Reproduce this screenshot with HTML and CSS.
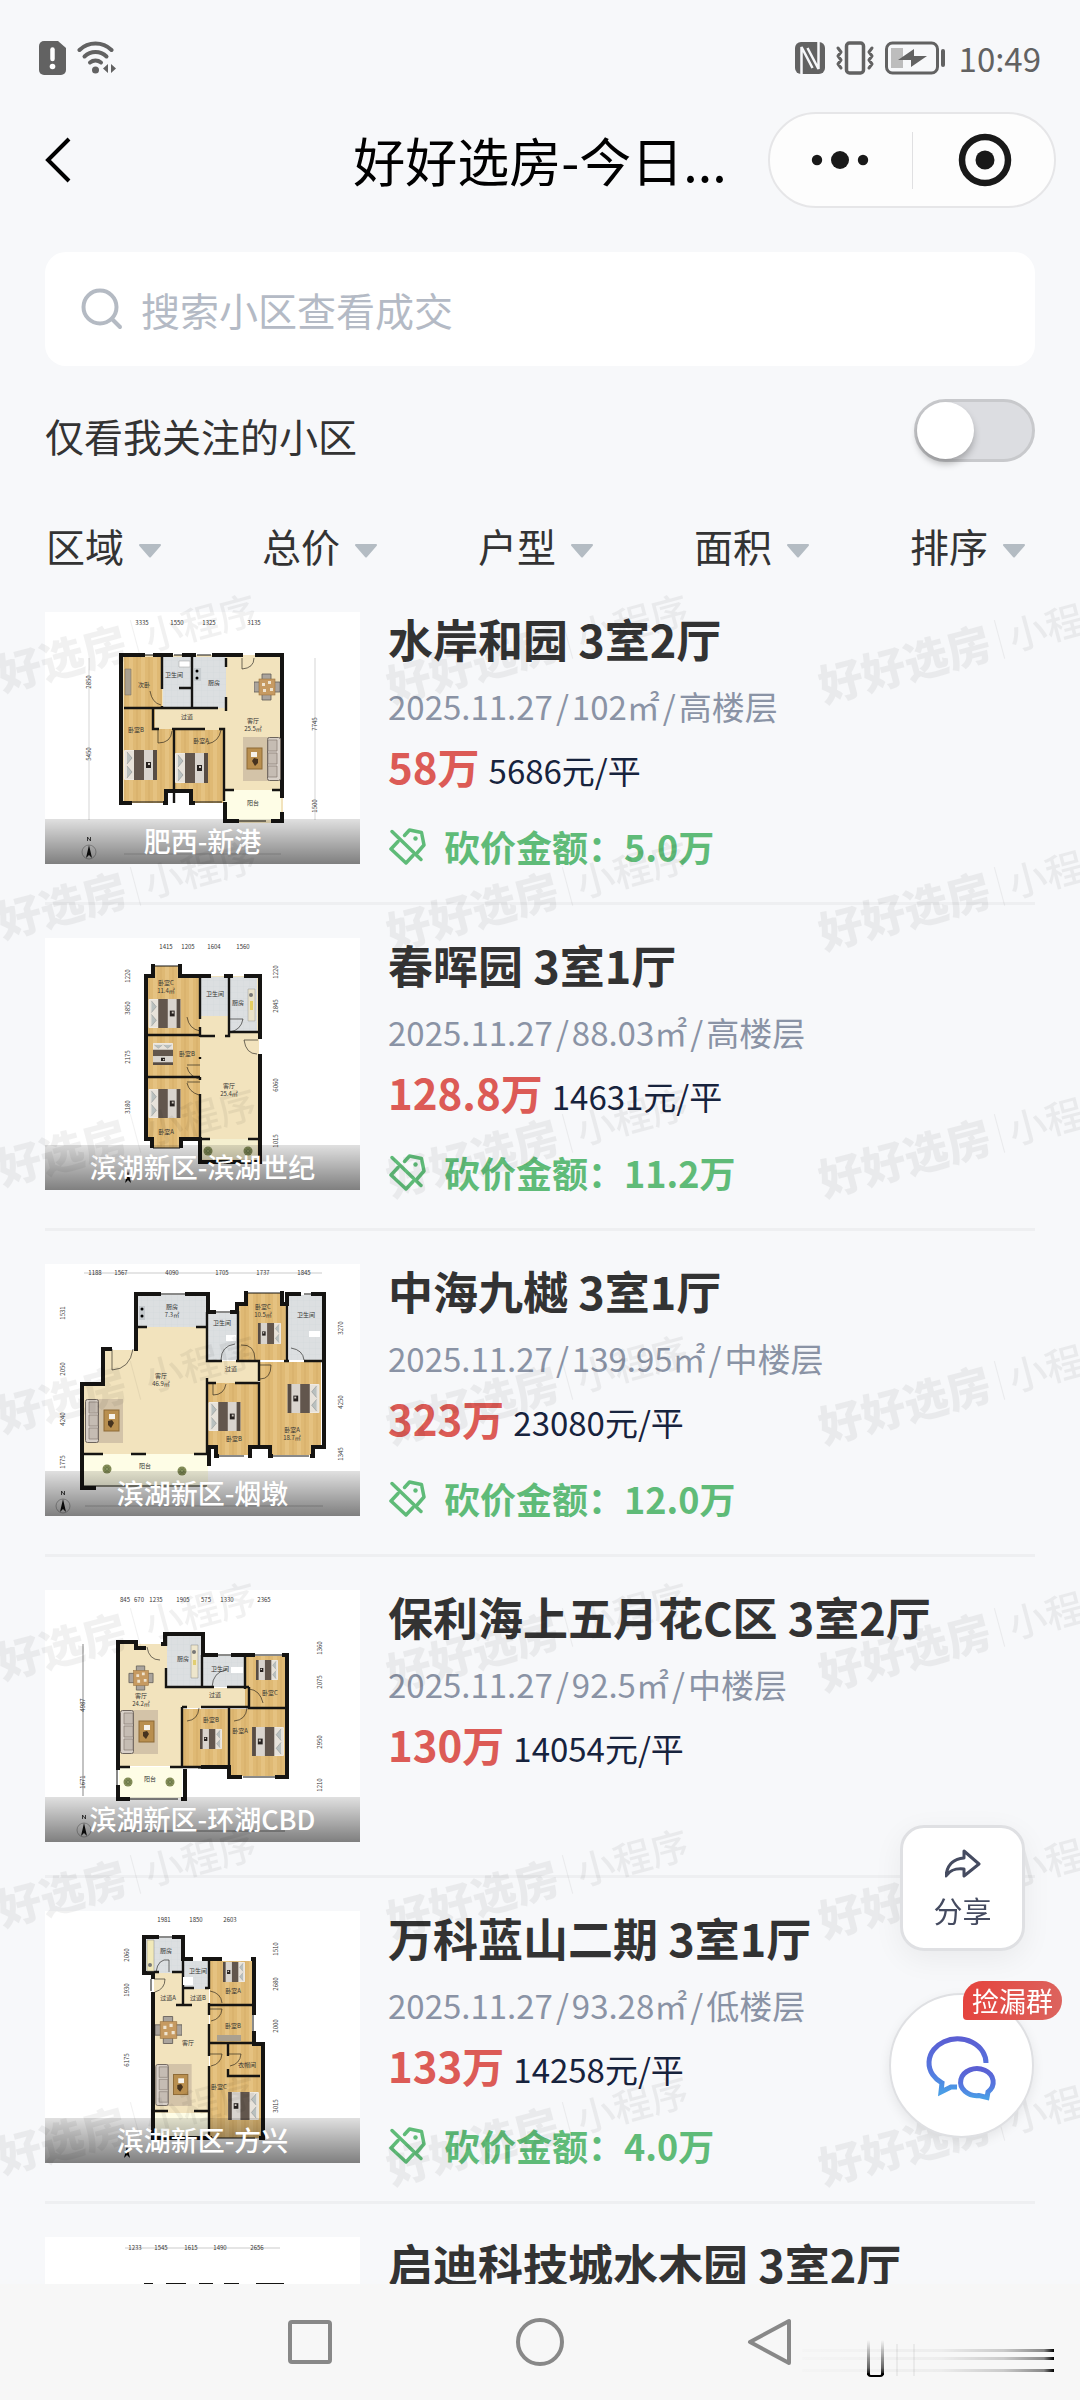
FILE: index.html
```html
<!DOCTYPE html>
<html lang="zh-CN">
<head>
<meta charset="utf-8">
<meta name="viewport" content="width=device-width, initial-scale=1">
<title>好好选房-今日成交</title>
<link rel="stylesheet" href="styles.css">
</head>
<body>

<!-- Shared drawings -->
<svg class="defs" aria-hidden="true">
  <defs>
    <linearGradient id="chat-fill" x1="0" y1="0" x2="0" y2="1">
      <stop offset="0" stop-color="#5b5fd3"/><stop offset=".6" stop-color="#5577df"/><stop offset="1" stop-color="#4a9de6"/>
    </linearGradient>
    <linearGradient id="smear" x1="0" y1="0" x2="1" y2="0">
      <stop offset="0" stop-color="#000" stop-opacity=".01"/><stop offset=".55" stop-color="#000" stop-opacity=".04"/><stop offset=".8" stop-color="#000" stop-opacity=".18"/><stop offset=".96" stop-color="#000" stop-opacity=".45"/><stop offset="1" stop-color="#000"/>
    </linearGradient>
    <linearGradient id="smear-down" x1="0" y1="0" x2="0" y2="1">
      <stop offset="0" stop-color="#000" stop-opacity="0"/><stop offset=".8" stop-color="#000" stop-opacity=".6"/><stop offset="1" stop-color="#000"/>
    </linearGradient>
    <pattern id="wood" width="12" height="16" patternUnits="userSpaceOnUse">
      <rect width="12" height="16" fill="#dfb974"/><rect width="4" height="16" fill="#e5c281"/><path d="M8 0v16" stroke="#d6ae68"/>
    </pattern>
    <pattern id="tile" width="6" height="6" patternUnits="userSpaceOnUse">
      <rect width="6" height="6" fill="#dcdfe1"/><path d="M0 0h6M0 0v6" stroke="#d2d6d8" stroke-width=".6"/>
    </pattern>
  </defs>
  <symbol id="bed" viewBox="0 0 33 30">
    <rect width="33" height="30" rx="1" fill="#efebe4"/>
    <path d="M1 1h9v28H1z" fill="#e7e2da"/><path d="M3 2l5 6-5 6M3 16l5 6-5 6" fill="#b9c0bf" stroke="#8d9090" stroke-width=".6"/>
    <path d="M10 0h10v30H10z" fill="#62564d"/><path d="M20 0h9v30h-9z" fill="#d9d4ce"/><path d="M29 0h4v30h-4z" fill="#574c44"/>
    <path d="M22 12h5v6h-5z" fill="#26211f"/><path d="M24 13h2v2h-2z" fill="#cfc9c2"/>
  </symbol>
  <symbol id="sofa" viewBox="0 0 38 44">
    <rect x="4" width="34" height="44" fill="#d3c3a8"/>
    <rect x=".5" y=".5" width="13" height="43" rx="2" fill="#d8d0c8" stroke="#6d645c"/>
    <path d="M4 3h9v11H4zM4 16h9v11H4zM4 29h9v11H4z" fill="#c5bcb3" stroke="#867c73" stroke-width=".7"/>
    <rect x="19" y="11" width="15" height="21" fill="#b98f4f" stroke="#8d6a36"/>
    <path d="M24 15h6v5h-6z" fill="#f6f2ea"/><path d="M23 22l4-1 2 3-3 5-3-3z" fill="#46331f"/>
  </symbol>
  <symbol id="dining" viewBox="0 0 26 28">
    <path d="M8 1h9v7H8zM8 20h9v7H8zM0 9h7v10H0zM19 9h7v10h-7z" fill="#aaa49d" stroke="#5f5a55" stroke-width=".8"/>
    <rect x="5" y="6" width="16" height="16" fill="#c69a61" stroke="#9a7340" stroke-width=".6"/>
    <path d="M8 10h3v3H8zM14 8h3v3h-3zM9 16h3v3H9zM16 15h3v3h-3z" fill="#eee3cf"/>
  </symbol>
  <symbol id="plant" viewBox="0 0 10 10">
    <circle cx="5" cy="5" r="4.5" fill="#7e8752"/><circle cx="5" cy="5" r="2.5" fill="#5e6d3c"/><path d="M1 5h8M5 1v8M2 2l6 6M8 2L2 8" stroke="#98a070" stroke-width=".5"/>
  </symbol>
  <symbol id="north" viewBox="0 0 16 24">
    <circle cx="8" cy="16" r="7" fill="none" stroke="#777" stroke-width=".5"/><path d="M8 9l3 13-3-3-3 3z" fill="#111"/><path d="M6.500 5V1l3 4V1" fill="none" stroke="#222" stroke-width=".8"/>
  </symbol>
  <symbol id="cut" viewBox="0 0 38 38">
    <g fill="none" stroke="#5fbb78" stroke-width="3.500" stroke-linecap="round" stroke-linejoin="round">
      <path d="M4 4.500L33 32.500"/>
      <path d="M16.500 8.500L21.500 3l12 2.500 2.500 12.500-6.500 7.500"/>
      <path d="M10 14.500L3 22l15 14 7-7.500"/>
    </g>
    <circle cx="27.500" cy="11.500" r="2.200" fill="#5fbb78"/>
  </symbol>
</svg>

<div class="app">
  <header class="header">
    <div class="status">
      <div class="status-group">
        <svg width="28" height="34" viewBox="0 0 28 34"><path d="M5 0h14l8 7v22a5 5 0 0 1-5 5H5a5 5 0 0 1-5-5V5a5 5 0 0 1 5-5z" fill="#626262"/><path d="M13.500 8.500v9.500" stroke="#fff" stroke-width="4.500" stroke-linecap="round"/><circle cx="13.500" cy="25.500" r="2.800" fill="#fff"/></svg>
        <svg width="40" height="34" viewBox="0 0 40 34"><g fill="none" stroke="#626262" stroke-width="4" stroke-linecap="round"><path d="M2.500 9a23 23 0 0 1 32 0"/><path d="M7.500 15.500a16 16 0 0 1 22 0"/><path d="M13 21.500a9 9 0 0 1 11 0"/></g><circle cx="18.500" cy="29" r="3.500" fill="#626262"/><path d="M31 23v9l-5-4.500zM34 23v9l5-4.500z" fill="#626262"/></svg>
      </div>
      <div class="status-group">
        <svg width="30" height="32" viewBox="0 0 30 32"><rect width="30" height="32" rx="6" fill="#626262"/><path d="M6.500 32V5l11 21" fill="none" stroke="#f7f8fa" stroke-width="2.500"/><path d="M23.500 0v27L12.500 6" fill="none" stroke="#f7f8fa" stroke-width="2.500"/></svg>
        <svg class="status-vibrate" width="40" height="34" viewBox="0 0 40 34"><g fill="none" stroke="#626262" stroke-linecap="round" stroke-linejoin="round"><rect x="11.500" y="2" width="17" height="30" rx="3" stroke-width="3.500"/><path d="M3 7l3 4-3 4 3 4-3 4 3 4M37 7l-3 4 3 4-3 4 3 4-3 4" stroke-width="3"/></g></svg>
        <svg width="61" height="34" viewBox="0 0 61 34"><rect x="1.500" y="2" width="51" height="30" rx="6" fill="none" stroke="#626262" stroke-width="3"/><path d="M6 7h12v20H6z" fill="#bdbdbd"/><path d="M29 8v7h13L26 26v-7H13z" fill="#626262"/><path d="M58 10v14" stroke="#626262" stroke-width="4" stroke-linecap="round"/></svg>
        <span class="status-time">10:49</span>
      </div>
    </div>
    <div class="navbar">
      <button class="back" type="button" aria-label="返回"><svg width="30" height="50" viewBox="0 0 30 50"><path d="M27 4L6 25l21 21" fill="none" stroke="#000" stroke-width="4"/></svg></button>
      <h1 class="page-title">好好选房-今日...</h1>
      <div class="capsule">
        <button type="button" aria-label="更多"><svg width="60" height="20" viewBox="0 0 60 20" fill="#191919"><circle cx="6" cy="10" r="5.200"/><circle cx="29" cy="10" r="9"/><circle cx="52" cy="10" r="5.200"/></svg></button>
        <span class="capsule-line"></span>
        <button type="button" aria-label="关闭"><svg width="58" height="54" viewBox="0 0 58 54"><circle cx="31" cy="27" r="23" fill="none" stroke="#191919" stroke-width="6.500"/><circle cx="31" cy="27" r="9.500" fill="#191919"/></svg></button>
      </div>
    </div>
  </header>

  <label class="search">
    <svg width="42" height="42" viewBox="0 0 42 42"><g fill="none" stroke="#b4bac3" stroke-width="4" stroke-linecap="round"><circle cx="19" cy="19" r="16.500"/><path d="M31 31l8 8"/></g></svg>
    <input type="search" placeholder="搜索小区查看成交" aria-label="搜索小区查看成交">
  </label>

  <div class="follow">
    <label for="follow-only">仅看我关注的小区</label>
    <input id="follow-only" class="switch" type="checkbox" role="switch">
  </div>

  <div class="filters">
    <div class="filter"><select aria-label="区域"><option>区域</option></select><svg class="caret" viewBox="0 0 26 16"><path d="M3 2h20L13 13.500z"/></svg></div>
    <div class="filter"><select aria-label="总价"><option>总价</option></select><svg class="caret" viewBox="0 0 26 16"><path d="M3 2h20L13 13.500z"/></svg></div>
    <div class="filter"><select aria-label="户型"><option>户型</option></select><svg class="caret" viewBox="0 0 26 16"><path d="M3 2h20L13 13.500z"/></svg></div>
    <div class="filter"><select aria-label="面积"><option>面积</option></select><svg class="caret" viewBox="0 0 26 16"><path d="M3 2h20L13 13.500z"/></svg></div>
    <div class="filter"><select aria-label="排序"><option>排序</option></select><svg class="caret" viewBox="0 0 26 16"><path d="M3 2h20L13 13.500z"/></svg></div>
  </div>

  <main class="list">
    <article class="deal">
      <figure class="plan">
        <svg viewBox="0 0 315 252" aria-hidden="true">
          <path d="M76 43h162v168h-60v-20H76z" fill="#f2e3bd"/>
          <path d="M79 45h38v51H79zM79 96h31v21h18v74H79zM130 118h48v73h-48z" fill="url(#wood)"/>
          <path d="M118 45h63v51h-63z" fill="url(#tile)"/><path d="M179 178h57v30h-57z" fill="#fefde6"/>
          <path d="M122 179h22v16h-22z" fill="#fff"/>
          <g fill="none" stroke="#151412"><path d="M87 191H76V43h24m8 0h20m9 0h14m16 0h31m12 0h27v143m0 14v9h-11m-32 0h-14v-19M118 191h3v-12h25v12h4" stroke-width="4"/><path d="M117 43v34m0 17v3M147 43v52M134 76h13M79 96h94m8-2v5m0-53v9m0 30v10M108 96v21h6m13 0h33m14 0h5v72M129 117v74M179 178h10m38 0h10" stroke-width="2.400"/><path d="M87 190h34m28 0h28M189 209h32M100 43h8m21 0h8m15 0h14" stroke-width="1"/><path d="M197 46v11q12-1 12-11M105 79q2 12 11 14M113 118v13q13 0 14-12M176 118q-2 12-14 14" stroke-width=".6"/></g>
          <path d="M80 57h6v26h-6z" fill="#aaa08f" stroke="#71695c" stroke-width=".5"/><path d="M134 49h11v6h-11z" fill="#fff" stroke="#999" stroke-width=".5"/><path d="M149 56h7v13h-7z" fill="#c8cdd0"/><circle cx="152" cy="59" r="1.500"/><circle cx="152" cy="66" r="1.500"/>
          <use href="#bed" x="79" y="138" width="33" height="30"/><use href="#bed" x="130" y="141" width="33" height="30"/>
          <use href="#dining" x="209" y="61" width="26" height="28"/><use href="#sofa" transform="translate(236 125) scale(-1 1)" width="38" height="44"/>
          <use href="#north" x="36" y="224" width="16" height="24"/>
          <path d="M44 46v162M270 46v162M79 242h157" stroke="#bbb" stroke-width=".6" fill="none"/>
          <g class="dims"><text x="97" y="13">3335</text><text x="132" y="13">1550</text><text x="164" y="13">1325</text><text x="209" y="13">3135</text><text transform="translate(46 70) rotate(-90)">2850</text><text transform="translate(46 142) rotate(-90)">5450</text><text transform="translate(272 112) rotate(-90)">7745</text><text transform="translate(272 194) rotate(-90)">1500</text><text x="99" y="75">次卧</text><text x="129" y="65">卫生间</text><text x="169" y="73">厨房</text><text x="142" y="107">过道</text><text x="91" y="120">卧室B</text><text x="156" y="131">卧室A</text><text x="208" y="111">客厅</text><text x="208" y="119">25.5㎡</text><text x="208" y="193">阳台</text></g>
        </svg>
        <figcaption>肥西-新港</figcaption>
      </figure>
      <div class="info">
        <h2>水岸和园 3室2厅</h2>
        <p class="meta"><span>2025.11.27</span><span>/</span><span>102㎡</span><span>/</span><span>高楼层</span></p>
        <p class="price"><strong>58万</strong><span>5686元/平</span></p>
        <p class="cut"><svg viewBox="0 0 38 38"><use href="#cut"/></svg><span>砍价金额：5.0万</span></p>
      </div>
    </article>

    <article class="deal">
      <figure class="plan">
        <svg viewBox="0 0 315 252" aria-hidden="true">
          <path d="M155 38h59v186h-59z" fill="#f2e3bd"/>
          <path d="M107 28h28v11h20v162h-20v9h-28v-9h-6V39h6z" fill="url(#wood)"/><path d="M156 39h27v39h-27zM185 39h27v55h-27z" fill="url(#tile)"/><path d="M156 201h56v20h-56z" fill="#f4efcf"/>
          <g fill="none" stroke="#151412"><path d="M108 40V26m0 12h-7v163h6v9m28-184v12h31m13 0h9m11 0h16v63m0 15v108h-60v-23h-19v9" stroke-width="4"/><path d="M155 38v43m0 8v8h-54m54 0v2m0 20v2m0 18h-54m54 0v3m0 14v64m0-122h15m10 0h4V38m0 53v3h29M155 201h10m38 0h10" stroke-width="2.400"/><path d="M108 28h27M108 210h27M101 100v38M160 223h45" stroke-width="1"/><path d="M142 79q2 12 13 14M142 127h13m-13 2q2 9 12 12M142 144h13m-13 1q2 9 12 12M199 102h14m-14 0q2 14 13 14M184 81h14q-2 11-13 13" stroke-width=".6"/></g>
          <use href="#bed" x="103" y="61" width="33" height="29"/><use href="#bed" x="103" y="151" width="33" height="29"/><use href="#bed" transform="translate(128 99) rotate(90)" width="34" height="20"/>
          <path d="M203 51h7v32h-7z" fill="#e9e2cb" stroke="#999" stroke-width=".5"/><path d="M205 63h3v9h-3z" fill="#e6cf62"/><circle cx="206" cy="57" r="2" fill="#777"/>
          <use href="#plant" x="158" y="208" width="10" height="10"/><use href="#plant" x="198" y="208" width="10" height="10"/>
          <path d="M83 233l3 12-3-3-3 3z"/>
          <g class="dims"><text x="121" y="11">1415</text><text x="143" y="11">1205</text><text x="169" y="11">1604</text><text x="198" y="11">1560</text><text transform="translate(85 70) rotate(-90)">3850</text><text transform="translate(85 119) rotate(-90)">2175</text><text transform="translate(85 169) rotate(-90)">3180</text><text transform="translate(85 38) rotate(-90)">1220</text><text transform="translate(233 34) rotate(-90)">1220</text><text transform="translate(233 68) rotate(-90)">2845</text><text transform="translate(233 147) rotate(-90)">6060</text><text transform="translate(233 203) rotate(-90)">1015</text><text x="121" y="47">卧室C</text><text x="121" y="55">11.4㎡</text><text x="142" y="118">卧室B</text><text x="170" y="58">卫生间</text><text x="193" y="67">厨房</text><text x="184" y="150">客厅</text><text x="184" y="158">25.4㎡</text><text x="121" y="196">卧室A</text></g>
        </svg>
        <figcaption>滨湖新区-滨湖世纪</figcaption>
      </figure>
      <div class="info">
        <h2>春晖园 3室1厅</h2>
        <p class="meta"><span>2025.11.27</span><span>/</span><span>88.03㎡</span><span>/</span><span>高楼层</span></p>
        <p class="price"><strong>128.8万</strong><span>14631元/平</span></p>
        <p class="cut"><svg viewBox="0 0 38 38"><use href="#cut"/></svg><span>砍价金额：11.2万</span></p>
      </div>
    </article>

    <article class="deal">
      <figure class="plan">
        <svg viewBox="0 0 315 252" aria-hidden="true">
          <path d="M92 63h70v34h51v22h-51v71H38v-69h21V86h33z" fill="#f2e3bd"/><path d="M92 31h70v32H92zM163 49h29v47h-29zM244 31h33v65h-33z" fill="url(#tile)"/>
          <path d="M193 40h8V29h34v11h7v56h-49zM215 98h61v84h-9v9h-41v-9h-11zM163 119h50v63h-8v9h-34v-9h-8z" fill="url(#wood)"/><path d="M38 190h125v33H38z" fill="#fefde6"/>
          <g fill="none" stroke="#151412"><path d="M67 85H58v35H37v104h14M91 87V30h25m24 0h23v18h8m14 0h7V40h9V27m36 0v13h5V30h14m10 0h13v153h-11v9h-3m-37 0h-3v-9h-20v9h-2m-29 0h-3v-9h-7v19" stroke-width="4"/><path d="M92 63h10m49 0h11M162 48v49h15m14 0h23v20M193 47v50h12m37-57v56m-3 1h5m15 0h19M162 114v75m0-70h9m19 0h24v64M38 190h20m28 0h15m48 0h13" stroke-width="2.400"/><path d="M116 30h24m31 18h14m16-19h35m23 1h10M171 192h28m29 0h36M38 222h124" stroke-width="1"/><path d="M67 85v21q18-1 21-21M190 80q-14 2-14 16M196 81q14-1 14 15M246 84q12 2 13 12M214 101h12q0 14-11 14M168 120v11q11 0 13-11" stroke-width=".6"/></g>
          <use href="#bed" transform="translate(241 59) scale(-1 1)" width="33" height="21"/><use href="#bed" transform="translate(275 120) scale(-1 1)" width="33" height="29"/><use href="#bed" x="163" y="138" width="33" height="29"/>
          <use href="#sofa" x="40" y="135" width="38" height="44"/><path d="M94 42h6v14h-6z" fill="#c4c9cd"/><circle cx="97" cy="45" r="1.500"/><circle cx="97" cy="52" r="1.500"/><path d="M181 71h10v6h-10zM264 67h11v6h-11z" fill="#fff"/>
          <use href="#plant" x="57" y="200" width="10" height="10"/><use href="#plant" x="132" y="202" width="10" height="10"/>
          <use href="#north" x="10" y="226" width="16" height="24"/><path d="M39 9h238M40 242h238" stroke="#aaa" stroke-width=".6"/>
          <g class="dims"><text x="50" y="11">1188</text><text x="76" y="11">1567</text><text x="127" y="11">4090</text><text x="177" y="11">1705</text><text x="218" y="11">1737</text><text x="259" y="11">1845</text><text transform="translate(20 49) rotate(-90)">1531</text><text transform="translate(20 105) rotate(-90)">2050</text><text transform="translate(20 155) rotate(-90)">4240</text><text transform="translate(20 198) rotate(-90)">1775</text><text transform="translate(298 64) rotate(-90)">3270</text><text transform="translate(298 138) rotate(-90)">4250</text><text transform="translate(298 190) rotate(-90)">1345</text><text x="127" y="45">厨房</text><text x="127" y="53">7.3㎡</text><text x="177" y="61">卫生间</text><text x="218" y="45">卧室C</text><text x="218" y="53">10.5㎡</text><text x="261" y="53">卫生间</text><text x="116" y="114">客厅</text><text x="116" y="122">46.9㎡</text><text x="186" y="107">过道</text><text x="189" y="177">卧室B</text><text x="247" y="168">卧室A</text><text x="247" y="176">18.7㎡</text><text x="100" y="204">阳台</text></g>
        </svg>
        <figcaption>滨湖新区-烟墩</figcaption>
      </figure>
      <div class="info">
        <h2>中海九樾 3室1厅</h2>
        <p class="meta"><span>2025.11.27</span><span>/</span><span>139.95㎡</span><span>/</span><span>中楼层</span></p>
        <p class="price"><strong>323万</strong><span>23080元/平</span></p>
        <p class="cut"><svg viewBox="0 0 38 38"><use href="#cut"/></svg><span>砍价金额：12.0万</span></p>
      </div>
    </article>

    <article class="deal">
      <figure class="plan">
        <svg viewBox="0 0 315 252" aria-hidden="true">
          <path d="M74 54h48v44h81v20h-66v58H74z" fill="#f2e3bd"/><path d="M122 45h34v52h-34zM158 66h41v31h-41z" fill="url(#tile)"/><path d="M200 66h41v52h-41zM137 119h46v58h-46zM185 119h56v67h-56z" fill="url(#wood)"/><path d="M74 177h63v31H74z" fill="#fefde6"/>
          <g fill="none" stroke="#151412"><path d="M85 209H73v-14m0-15V52h18v6h10m15-4h4V44h38v21h15m13 0h24m27 0h5v122h-12m-33 0h-13v-10h-28m-16 2v30h-4" stroke-width="4"/><path d="M121 44v12m0 22v19h48m13 0h22m-47 0V65m43 0v34m4-2v21h38M137 117v60m0-60h5m14 0h48M184 118v67M73 177h12m40 0h34m14 0h11" stroke-width="2.400"/><path d="M72 180v15M85 209h48M172 65h14m23 0h28M198 187h34M153 178h21M139 180v28" stroke-width="1"/><path d="M102 57q2 13 13 13M181 80q-13 2-14 17M204 99q11 1 14 14M142 131q11-1 12-13M189 131q12-1 13-13" stroke-width=".6"/></g>
          <use href="#dining" x="82" y="75" width="28" height="26"/><use href="#sofa" x="75" y="120" width="38" height="44"/>
          <use href="#bed" transform="translate(239 70) scale(-1 1)" width="34" height="20"/><use href="#bed" transform="translate(183 139) scale(-1 1)" width="34" height="20"/><use href="#bed" transform="translate(240 137) scale(-1 1)" width="34" height="29"/>
          <path d="M146 55h7v33h-7z" fill="#eee6cc" stroke="#888" stroke-width=".5"/><circle cx="149" cy="62" r="2" fill="#777"/><path d="M148 70h3v5h-3z" fill="#e1ce72"/><path d="M186 77h12v6h-12z" fill="#fff"/>
          <use href="#plant" x="78" y="187" width="10" height="10"/><use href="#plant" x="120" y="187" width="10" height="10"/>
          <use href="#north" x="31" y="224" width="16" height="24"/><path d="M38 54v152M75 241h165" stroke="#555" stroke-width=".7"/>
          <g class="dims"><text x="80" y="12">845</text><text x="94" y="12">670</text><text x="111" y="12">1235</text><text x="138" y="12">1905</text><text x="161" y="12">575</text><text x="182" y="12">1330</text><text x="219" y="12">2365</text><text transform="translate(40 115) rotate(-90)">4987</text><text transform="translate(40 192) rotate(-90)">1671</text><text transform="translate(277 58) rotate(-90)">1360</text><text transform="translate(277 92) rotate(-90)">2075</text><text transform="translate(277 152) rotate(-90)">2950</text><text transform="translate(277 195) rotate(-90)">1210</text><text x="138" y="71">厨房</text><text x="175" y="81">卫生间</text><text x="225" y="105">卧室C</text><text x="170" y="107">过道</text><text x="96" y="108">客厅</text><text x="96" y="116">24.2㎡</text><text x="166" y="132">卧室B</text><text x="195" y="143">卧室A</text><text x="105" y="191">阳台</text></g>
        </svg>
        <figcaption>滨湖新区-环湖CBD</figcaption>
      </figure>
      <div class="info">
        <h2>保利海上五月花C区 3室2厅</h2>
        <p class="meta"><span>2025.11.27</span><span>/</span><span>92.5㎡</span><span>/</span><span>中楼层</span></p>
        <p class="price"><strong>130万</strong><span>14054元/平</span></p>
      </div>
    </article>

    <article class="deal">
      <figure class="plan">
        <svg viewBox="0 0 315 252" aria-hidden="true">
          <path d="M109 62h55v140h-55z" fill="#f2e3bd"/><path d="M100 27h37v35h-37zM138 50h26v28h-26z" fill="url(#tile)"/><path d="M165 50h42v81h9v96h-51z" fill="url(#wood)"/><path d="M109 202h54v24h-54z" fill="#fefde6"/><path d="M138 79h26v16h-26z" fill="#f2e3bd"/>
          <g fill="none" stroke="#151412"><path d="M108 68v-6H99V26h15m13 0h11v22h10m9 0h20m29 0h3v56m0 16v13h9v94h-4m-47 0h-59V81" stroke-width="4"/><path d="M109 61h5m13 0h11V48m0 13v33h9m-16 0h8m-1-17h11m11 0h4M164 48v30m0 14v12m0 9v32m0 10v72m0-133h44m-44 38h45M183 133v12m0 13v7h32M109 200h14m26 0h15" stroke-width="2.400"/><path d="M114 26h13M106 68v12M208 104v16M167 227h43" stroke-width="1"/><path d="M111 61q2-14 13-12v12M109 68h11q0 10-10 13M165 80q11 2 12 12M165 98h12q-1 10-11 12M165 143h12q-1 10-11 12M184 143h12q-1 10-11 12" stroke-width=".6" fill="none"/></g>
          <path d="M102 29h7v31h-7z" fill="#f1e9b9" stroke="#888" stroke-width=".5"/><circle cx="105" cy="54" r="2" fill="#777"/><path d="M138 66h10v8h-10z" fill="#fff"/>
          <use href="#dining" x="110" y="102" width="27" height="34"/><use href="#sofa" x="110" y="153" width="37" height="42"/>
          <use href="#bed" transform="translate(206 51) scale(-1 1)" width="34" height="20"/><use href="#bed" transform="translate(215 181) scale(-1 1)" width="33" height="28"/><path d="M172 124h24v6h-24z" fill="#aaa08f"/>
          <path d="M82 235l3 12-3-3-3 3z"/>
          <g class="dims"><text x="119" y="11">1981</text><text x="151" y="11">1850</text><text x="185" y="11">2603</text><text transform="translate(84 44) rotate(-90)">2060</text><text transform="translate(84 79) rotate(-90)">1930</text><text transform="translate(84 149) rotate(-90)">6175</text><text transform="translate(233 38) rotate(-90)">1510</text><text transform="translate(233 73) rotate(-90)">2680</text><text transform="translate(233 115) rotate(-90)">2000</text><text transform="translate(233 195) rotate(-90)">3015</text><text x="121" y="42">厨房</text><text x="153" y="62">卫生间</text><text x="123" y="89">过道A</text><text x="153" y="89">过道B</text><text x="188" y="82">卧室A</text><text x="188" y="117">卧室B</text><text x="143" y="134">客厅</text><text x="202" y="156">衣帽间</text><text x="174" y="178">卧室C</text></g>
        </svg>
        <figcaption>滨湖新区-方兴</figcaption>
      </figure>
      <div class="info">
        <h2>万科蓝山二期 3室1厅</h2>
        <p class="meta"><span>2025.11.27</span><span>/</span><span>93.28㎡</span><span>/</span><span>低楼层</span></p>
        <p class="price"><strong>133万</strong><span>14258元/平</span></p>
        <p class="cut"><svg viewBox="0 0 38 38"><use href="#cut"/></svg><span>砍价金额：4.0万</span></p>
      </div>
    </article>

    <article class="deal">
      <figure class="plan">
        <svg viewBox="0 0 315 252" aria-hidden="true">
          <path d="M80 11h155" stroke="#aaa" stroke-width=".6"/><path d="M99 48h9m13 0h20m13 0h14m11 0h15m17 0h28" stroke="#151412" stroke-width="4"/>
          <g class="dims"><text x="90" y="13">1233</text><text x="116" y="13">1545</text><text x="146" y="13">1615</text><text x="175" y="13">1490</text><text x="212" y="13">2656</text></g>
        </svg>
      </figure>
      <div class="info">
        <h2>启迪科技城水木园 3室2厅</h2>
      </div>
    </article>

    <svg class="watermark" aria-hidden="true">
      <defs>
        <pattern id="mark" x="-48" y="12" width="432" height="247" patternUnits="userSpaceOnUse">
          <g transform="translate(8 112) rotate(-15)">
            <text class="mark-name" x="0" y="0">好好选房</text>
            <path d="M186 -36v40" stroke="#000" stroke-width="1"/>
            <text class="mark-kind" x="196" y="-1">小程序</text>
          </g>
        </pattern>
      </defs>
      <rect width="100%" height="100%" fill="url(#mark)"/>
    </svg>
  </main>

  <button class="share" type="button">
    <svg width="36" height="32" viewBox="0 0 36 32"><path d="M19 3l15 13-15 12v-7C10 20 5 22 1 28 2 17 8 11 19 10z" fill="none" stroke="#454b60" stroke-width="3" stroke-linejoin="round"/></svg>
    <span>分享</span>
  </button>
  <button class="chat" type="button" aria-label="捡漏群">
    <svg width="72" height="72" viewBox="0 0 72 72"><g fill="none" stroke="url(#chat-fill)" stroke-width="5"><path d="M60 33A28.500 24 0 1 0 16 53l-1 9 10-5h6"/><path d="M62 62A16.300 13.500 0 1 0 53 65.500l8 2z"/></g></svg>
    <span class="chat-tag">捡漏群</span>
  </button>

  <nav class="system-nav" aria-label="系统导航">
    <button type="button" aria-label="最近任务"><svg width="50" height="50" viewBox="0 0 50 50"><rect x="5" y="5" width="40" height="40" rx="2"/></svg></button>
    <button type="button" aria-label="主页"><svg width="50" height="50" viewBox="0 0 50 50"><circle cx="25" cy="25" r="22"/></svg></button>
    <button type="button" aria-label="返回"><svg width="50" height="50" viewBox="0 0 50 50"><path d="M44 4v42L5 25z" stroke-linejoin="round"/></svg></button>
    <svg class="smear" width="256" height="40" viewBox="0 0 256 40" aria-hidden="true">
      <path d="M2 9h252v3H2zM2 17h252v3H2zM2 29h252v3H2z" fill="url(#smear)"/>
      <path d="M67 0h3v35h-3zM81 0h3v35h-3z" fill="url(#smear-down)"/><path d="M68 33q0 3 3 3h9q3 0 3-3" fill="none" stroke="#000" stroke-width="2"/>
      <path d="M97 4v32M114 4v32" stroke="#000" stroke-opacity=".05" stroke-width="2"/>
    </svg>
  </nav>
</div>
</body>
</html>
```
FILE: styles.css
```css
* {
  box-sizing: border-box;
}

body {
  margin: 0;
  background: #f7f8fa;
  color: #333;
  font-family: "Noto Sans CJK SC", "Noto Sans", sans-serif;
}

h1, h2, p, figure {
  margin: 0;
}

button, input, select {
  margin: 0;
  padding: 0;
  border: 0;
  background: none;
  color: inherit;
  font: inherit;
}

svg {
  display: block;
  flex: none;
}

.defs {
  position: absolute;
  width: 0;
  height: 0;
}

.app {
  display: flex;
  flex-direction: column;
  height: 100vh;
  overflow: hidden;
}

/* Status bar and title bar */
.status {
  display: flex;
  justify-content: space-between;
  align-items: center;
  height: 112px;
  padding: 4px 39px 0;
}

.status-group {
  display: flex;
  align-items: center;
  gap: 10px;
}

.status-time {
  margin-left: 3px;
  color: #626262;
  font-size: 33px;
  line-height: 40px;
}

.navbar {
  display: grid;
  grid-template-columns: 1fr auto 1fr;
  align-items: center;
  height: 96px;
  padding: 0 24px;
}

.back {
  justify-self: start;
  padding: 0 18px;
}

.page-title {
  color: #000;
  font-size: 52px;
  font-weight: 400;
  line-height: 72px;
}

.capsule {
  display: flex;
  justify-self: end;
  align-items: center;
  width: 288px;
  height: 96px;
  border: 2px solid #e6e6e8;
  border-radius: 48px;
  background: #fdfdfd;
}

.capsule button {
  display: flex;
  flex: 1;
  justify-content: center;
}

.capsule-line {
  width: 1px;
  height: 57px;
  background: #e0e0e2;
}

/* Search and follow switch */
.search {
  display: flex;
  align-items: center;
  gap: 18px;
  height: 114px;
  margin: 44px 45px 0;
  padding: 0 36px;
  border-radius: 21px;
  background: #fff;
}

.search input {
  flex: 1;
  min-width: 0;
  height: 60px;
  outline: 0;
  font-size: 39px;
  appearance: none;
}

.search input::placeholder {
  color: #b4bac5;
  opacity: 1;
}

.follow {
  display: flex;
  justify-content: space-between;
  align-items: flex-end;
  margin: 33px 45px 0;
  font-size: 39px;
  line-height: 54px;
}

.switch {
  position: relative;
  width: 121px;
  height: 63px;
  border: 3px solid #c8c9cc;
  border-radius: 32px;
  background: #dcdde1;
  appearance: none;
}

.switch::before {
  position: absolute;
  top: 0;
  left: 0;
  width: 57px;
  height: 57px;
  border-radius: 50%;
  background: #fff;
  box-shadow: 0 5px 7px rgba(0, 0, 0, .25);
  content: "";
}

.switch:checked::before {
  left: 58px;
}

.filters {
  display: grid;
  flex: none;
  grid-template-columns: repeat(5, 1fr);
  margin-top: 52px;
  padding-bottom: 4px;
}

.filter {
  display: flex;
  align-items: center;
  gap: 12px;
  height: 61px;
  padding-left: 46px;
}

.filter select {
  font-size: 39px;
  line-height: 58px;
  appearance: none;
}

.caret {
  width: 26px;
  height: 16px;
  margin-top: 12px;
  fill: #b4bcc3;
  stroke: #b4bcc3;
  stroke-width: 2;
  stroke-linejoin: round;
}

/* Deals */
.list {
  position: relative;
  flex: 1;
  min-height: 0;
  overflow: hidden;
}

.deal {
  display: flex;
  gap: 28px;
  margin: 0 45px;
  padding: 33px 0;
  border-bottom: 3px solid #eeeff1;
}

.plan {
  position: relative;
  flex: none;
  width: 315px;
  height: 252px;
  background: #fff;
}

.plan figcaption {
  position: absolute;
  right: 0;
  bottom: 0;
  left: 0;
  background: linear-gradient(rgba(0, 0, 0, .12), rgba(0, 0, 0, .5));
  color: #fff;
  font-size: 27px;
  font-weight: 500;
  line-height: 43px;
  padding-bottom: 2px;
  text-align: center;
}

.dims {
  fill: #333;
  font-size: 6px;
  text-anchor: middle;
}

.info {
  min-width: 0;
}

.info h2 {
  font-size: 45px;
  font-weight: 700;
  line-height: 54px;
}

.meta {
  display: flex;
  gap: 3px;
  margin-top: 17px;
  color: #8a93a5;
  font-size: 33px;
  line-height: 46px;
}

.price {
  display: flex;
  align-items: baseline;
  gap: 9px;
  height: 54px;
  margin-top: 10px;
  color: #17233d;
  font-size: 33px;
  line-height: 54px;
}

.price strong {
  color: #dc5b56;
  font-size: 42px;
}

.cut {
  display: flex;
  align-items: center;
  gap: 18px;
  margin-top: 30px;
  color: #5fbb78;
  font-size: 36px;
  font-weight: 700;
  line-height: 46px;
}

.cut svg {
  width: 38px;
  height: 38px;
}

.watermark {
  position: absolute;
  inset: 0;
  width: 100%;
  height: 100%;
  opacity: .05;
  pointer-events: none;
}

.mark-name {
  font-size: 44px;
  font-weight: 900;
}

.mark-kind {
  font-size: 38px;
  font-weight: 500;
}

/* Floating actions */
.share {
  position: fixed;
  right: 55px;
  bottom: 449px;
  display: flex;
  flex-direction: column;
  align-items: center;
  justify-content: center;
  gap: 10px;
  width: 125px;
  height: 126px;
  padding-top: 2px;
  border: 3px solid #dfe0e3;
  border-radius: 24px;
  background: #fff;
  box-shadow: 0 8px 30px rgba(0, 0, 0, .06);
  color: #454b60;
  font-size: 29px;
  line-height: 40px;
}

.chat {
  position: fixed;
  right: 46px;
  bottom: 262px;
  display: flex;
  align-items: center;
  justify-content: center;
  width: 145px;
  height: 145px;
  border: 2px solid #dfe0e3;
  border-radius: 50%;
  background: #fff;
  box-shadow: 0 4px 12px rgba(0, 0, 0, .08);
}

.chat-tag {
  position: absolute;
  top: -14px;
  right: -30px;
  padding: 0 9px;
  border-radius: 20px 20px 20px 4px;
  background: linear-gradient(100deg, #e5423c, #dc655f);
  color: #fff;
  font-size: 27px;
  line-height: 39px;
  white-space: nowrap;
}

/* System navigation */
.system-nav {
  position: relative;
  display: flex;
  flex: none;
  justify-content: center;
  gap: 180px;
  height: 116px;
  background: #f7f7f7;
}

.system-nav button svg {
  fill: none;
  stroke: #888;
  stroke-width: 4;
}

.smear {
  position: absolute;
  right: 24px;
  bottom: 20px;
}
```
